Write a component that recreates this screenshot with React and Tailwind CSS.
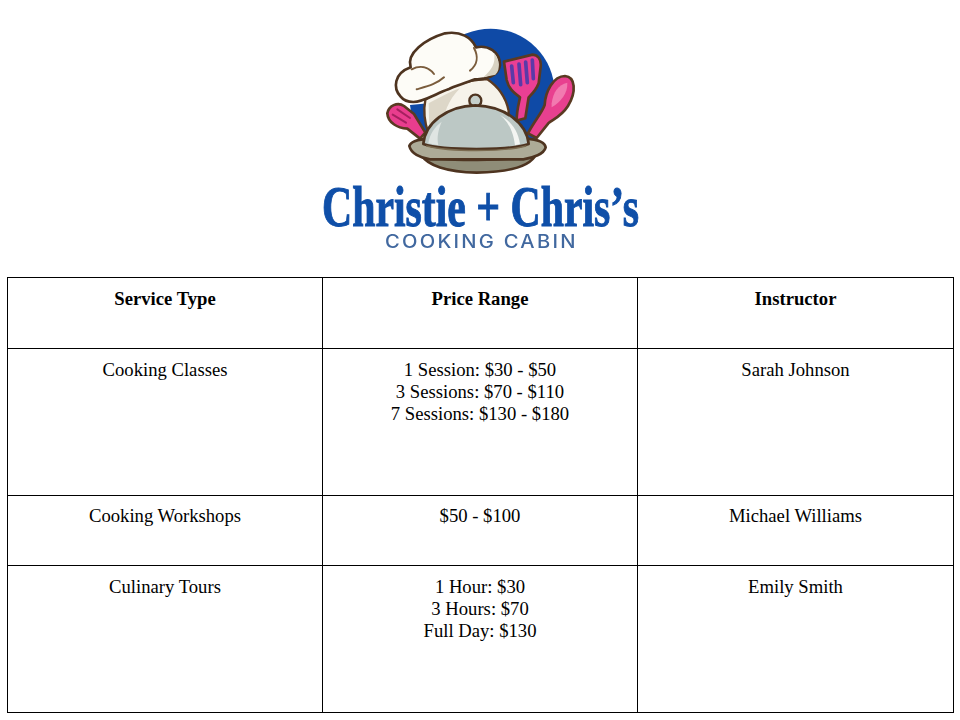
import React from 'react';

const rows = [
  { service: 'Cooking Classes', price: ['1 Session: $30 - $50', '3 Sessions: $70 - $110', '7 Sessions: $130 - $180'], instructor: 'Sarah Johnson', height: 'h-[147px]', pad: 'pt-[10px]' },
  { service: 'Cooking Workshops', price: ['$50 - $100'], instructor: 'Michael Williams', height: 'h-[70px]', pad: 'pt-[9px]' },
  { service: 'Culinary Tours', price: ['1 Hour: $30', '3 Hours: $70', 'Full Day: $130'], instructor: 'Emily Smith', height: 'h-[147px]', pad: 'pt-[10px]' },
];

const Logo = () => (
  <svg width="340" height="240" viewBox="310 20 340 240" className="block blur-[0.5px]">
    <g transform="translate(370 20) scale(0.3333)" strokeLinejoin="round" strokeLinecap="round">
      {/* blue disc */}
      <circle cx="362" cy="218" r="192" fill="#0f4aa6" />
      <path d="M120 255 L175 250 L175 340 L130 320 Z" fill="#0f4aa6" />

      {/* spoon */}
      <path d="M474 340 C495 300 515 280 524 255 C526 215 550 168 585 168 C616 170 620 215 594 258 C575 288 550 298 535 310 L500 354 Z" fill="#e8408f" stroke="#5a3a22" strokeWidth="8" />
      <path d="M545 250 C550 215 565 195 592 188 C594 220 572 245 545 262 Z" fill="#f27ab0" />

      {/* spatula */}
      <path d="M402 125 L488 104 C506 106 514 120 512 140 L506 190 C498 212 486 222 476 232 L466 295 L440 302 C440 270 448 245 450 232 C428 215 416 205 410 180 Z" fill="#ea3f94" stroke="#5a3a22" strokeWidth="8" />
      <path d="M425 138 L430 188 M447 132 L452 194 M467 126 L472 188 M487 120 L490 176" stroke="#5b3aa8" strokeWidth="11" />

      {/* fork */}
      <path d="M52 280 C56 258 82 244 102 258 L132 282 L166 338 L150 356 L112 326 C82 324 54 308 52 280 Z" fill="#e93d8e" stroke="#5a3a22" strokeWidth="8" />
      <path d="M68 284 L108 308 M82 268 L120 294" stroke="#a5205f" strokeWidth="6" />

      {/* hat body */}
      <path d="M166 240 C200 210 300 175 352 178 C385 200 408 235 416 272 L412 340 L175 340 C165 310 160 270 166 240 Z" fill="#f6f3ea" stroke="#5a3a22" strokeWidth="7" />
      <path d="M176 250 C215 230 240 215 270 205 C235 240 220 280 215 330 L178 335 Z" fill="#ddd7c8" />

      {/* hat puffs */}
      <path d="M92 230 C68 204 72 160 122 142 C108 100 165 58 225 40 C272 32 304 52 318 82 C354 74 390 95 390 135 C386 168 345 180 315 178 C280 192 255 198 235 208 C200 220 160 246 130 246 C115 246 100 240 92 230 Z" fill="#fdfcf7" stroke="#4e3420" strokeWidth="8" />
      <path d="M140 208 C175 198 200 192 222 172 M125 148 C150 135 175 140 192 162 M312 84 C326 110 322 135 300 152" fill="none" stroke="#7a5c3c" strokeWidth="6" />
      <path d="M340 172 C365 150 378 130 372 100 C386 115 394 150 376 164 Z" fill="#d8d2c2" />

      {/* plate */}
      <path d="M155 405 C200 425 440 425 498 402 C484 436 430 456 320 458 C230 456 172 436 155 405 Z" fill="#8f8d78" stroke="#4e3420" strokeWidth="8" />
      <path d="M118 378 C123 362 150 358 175 356 L470 356 C495 358 524 365 527 382 C522 402 490 414 460 418 L180 418 C150 414 123 400 118 378 Z" fill="#adab97" stroke="#4e3420" strokeWidth="8" />

      {/* cloche */}
      <circle cx="316" cy="242" r="18" fill="#c5cfca" stroke="#4e3420" strokeWidth="7" />
      <path d="M160 372 C165 310 230 258 316 256 C405 258 470 310 476 372 C420 392 220 392 160 372 Z" fill="#bcc8c5" stroke="#4e3420" strokeWidth="8" />
      <path d="M390 285 C425 305 445 335 450 372 L435 376 C430 335 415 305 390 285 Z" fill="#f3f5f2" />
      <path d="M175 370 C180 340 195 320 215 305 C205 330 200 350 205 376 Z" fill="#dfe5e2" />
      <path d="M170 378 C240 396 400 396 468 378" fill="none" stroke="#7b6b50" strokeWidth="4" />
    </g>

    <text transform="translate(322 226) scale(0.746 1)" fill="#0f4fa8" stroke="#0f4fa8" strokeWidth="1" fontFamily="'Liberation Serif', serif" fontWeight="700" fontSize="56">
      Christie + Chris’s
    </text>
    <text transform="translate(385 248) scale(1.12 1)" textLength="170" lengthAdjust="spacing" fill="#41689f" fontFamily="Inter, sans-serif" fontWeight="500" fontSize="18">
      COOKING CABIN
    </text>
  </svg>
);

const App = () => {
  return (
    <div className="w-[960px] h-[720px] overflow-hidden bg-white text-black font-['Liberation_Serif',serif] text-[18.67px] leading-[22px]">
      <div className="h-[277px] pt-5 flex justify-center">
        <Logo />
      </div>

      <table className="ml-[7px] w-[946px] table-fixed border-collapse">
        <colgroup>
          <col className="w-[315px]" />
          <col className="w-[315px]" />
          <col className="w-[316px]" />
        </colgroup>
        <thead>
          <tr className="h-[71px]">
            <th className="border border-black pt-[10px] px-2 align-top text-center font-bold">Service Type</th>
            <th className="border border-black pt-[10px] px-2 align-top text-center font-bold">Price Range</th>
            <th className="border border-black pt-[10px] px-2 align-top text-center font-bold">Instructor</th>
          </tr>
        </thead>
        <tbody>
          {rows.map((row) => (
            <tr key={row.service} className={row.height}>
              <td className={`border border-black ${row.pad} px-2 align-top text-center`}>{row.service}</td>
              <td className={`border border-black ${row.pad} px-2 align-top text-center`}>
                {row.price.map((line) => (
                  <div key={line}>{line}</div>
                ))}
              </td>
              <td className={`border border-black ${row.pad} px-2 align-top text-center`}>{row.instructor}</td>
            </tr>
          ))}
        </tbody>
      </table>
    </div>
  );
};

export default App;
